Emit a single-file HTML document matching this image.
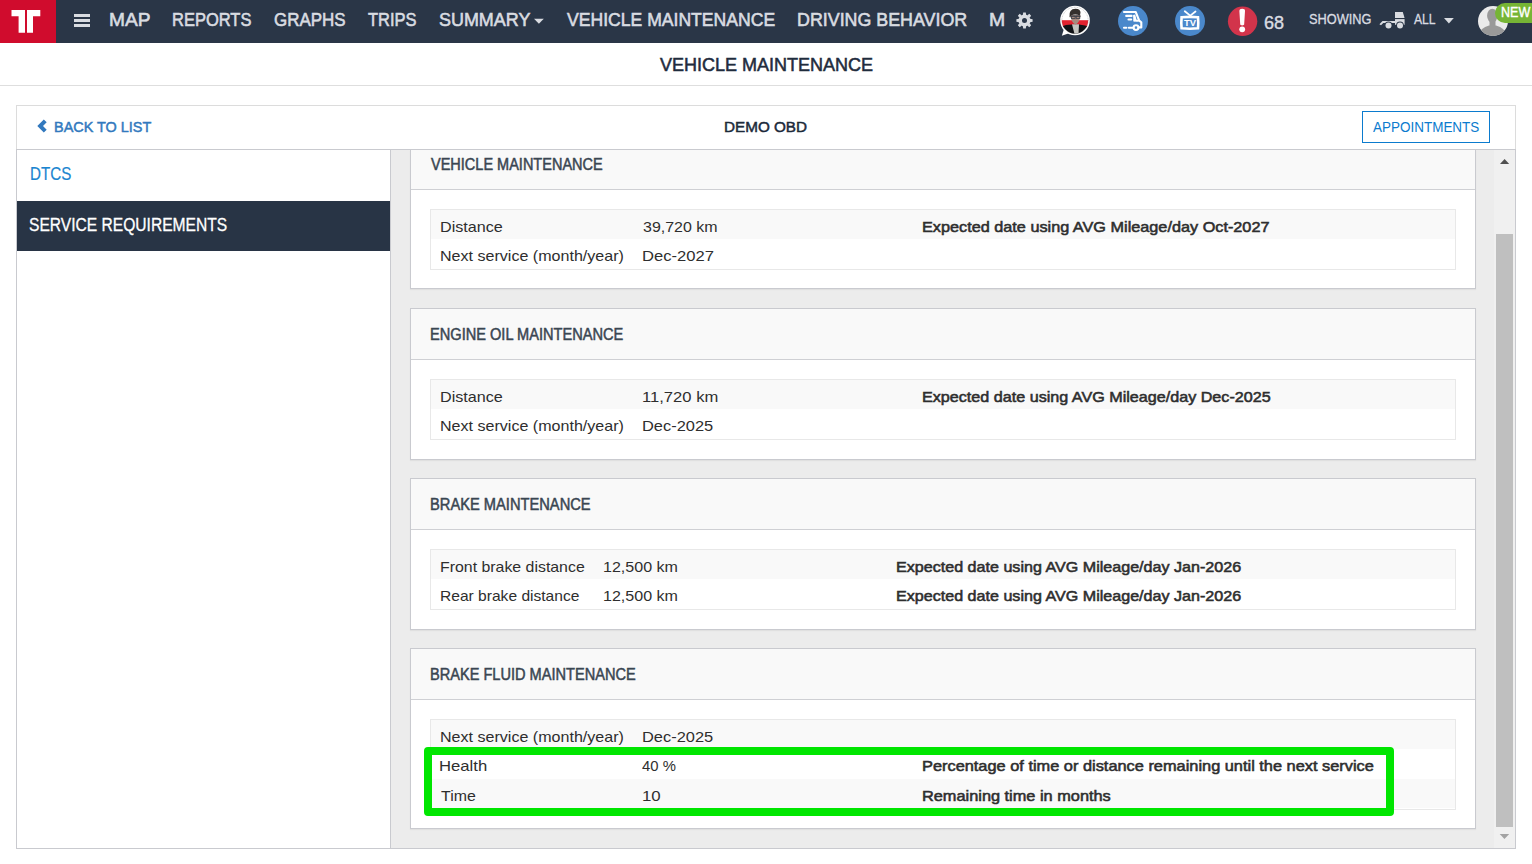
<!DOCTYPE html>
<html><head><meta charset="utf-8"><title>Vehicle Maintenance</title>
<style>
html,body{margin:0;padding:0;width:1532px;height:864px;overflow:hidden;background:#fff;font-family:"Liberation Sans",sans-serif;}
.b{position:absolute;box-sizing:border-box;}
.t{position:absolute;white-space:nowrap;line-height:normal;transform-origin:0 0;font-family:"Liberation Sans",sans-serif;}
svg{position:absolute;overflow:visible}
</style></head><body>
<!-- navbar -->
<div class=b style="left:0;top:0;width:1532px;height:43px;background:#2a3647"></div>
<div class=b style="left:0;top:0;width:56px;height:43px;background:#d00c2d"></div>
<svg style="left:0;top:0" width="56" height="42"><path fill="#fff" d="M11.5 10H25V32.7H18.6V16.2H11.5Z M27 10H40.3V16.2H33V32.7H27Z"/></svg>
<div class=b style="left:74px;top:14px;width:16px;height:3px;background:#d9dce1"></div>
<div class=b style="left:74px;top:19px;width:16px;height:3px;background:#d9dce1"></div>
<div class=b style="left:74px;top:24px;width:16px;height:3px;background:#d9dce1"></div>
<svg style="left:0;top:0" width="1" height="1"><path fill="#d9dce1" d="M534 18.7H543.8L538.9 23.8Z"/></svg>
<!-- gear -->
<svg style="left:1015.9px;top:11.9px" width="17" height="17" viewBox="-8.5 -8.5 17 17"><g fill="#d9dce1"><circle r="6"/>
<path id="tooth" d="M-1.7 -5.5L-1.3 -8.1H1.3L1.7 -5.5Z"/>
<use href="#tooth" transform="rotate(45)"/><use href="#tooth" transform="rotate(90)"/><use href="#tooth" transform="rotate(135)"/><use href="#tooth" transform="rotate(180)"/><use href="#tooth" transform="rotate(225)"/><use href="#tooth" transform="rotate(270)"/><use href="#tooth" transform="rotate(315)"/></g>
<circle r="2.5" fill="#2a3647"/></svg>
<!-- avatar -->
<svg style="left:1058px;top:4px" width="34" height="34" viewBox="1058 4 34 34">
<defs><clipPath id="avc"><circle cx="1075" cy="20.5" r="13.2"/></clipPath></defs>
<path fill="#fff" d="M1061.8 35.8L1063.8 29.5L1069 33.2Z"/>
<circle cx="1075" cy="20.5" r="14.8" fill="#fff"/>
<g clip-path="url(#avc)">
<rect x="1060" y="4" width="30" height="16.5" fill="#fff"/>
<rect x="1060" y="20.2" width="30" height="7" fill="#e2222f"/>
<path fill="#101216" d="M1060 40V27L1066 25L1072 24.5L1079 24.5L1085 25.5L1090 27V40Z"/>
<path fill="#c4c4c0" d="M1072 24.2L1079 24.2L1078.5 34H1074.5Z"/>
<path fill="#a88a7e" d="M1070.5 15Q1071 22.5 1075.5 24.8Q1080 22.5 1080.5 15Z"/>
<path fill="#35302d" d="M1069.5 17Q1068.5 9 1075.5 8.8Q1080.5 9 1080.5 12.5L1080 15.5Q1075 13.5 1071 15.5L1070.5 17.5Z"/>
<path fill="none" stroke="#3a3f48" stroke-width="1.1" d="M1071.2 16.3H1080.5"/>
<rect x="1071.5" y="16" width="3.6" height="2.4" fill="none" stroke="#3a3f48" stroke-width="0.8"/>
<rect x="1076.2" y="16" width="3.6" height="2.4" fill="none" stroke="#3a3f48" stroke-width="0.8"/>
</g>
<circle cx="1075" cy="20.5" r="13.2" fill="none" stroke="#777" stroke-width="0.4" stroke-dasharray="0.8 0.8"/>
</svg>
<!-- truck circle -->
<svg style="left:1116px;top:4px" width="34" height="34" viewBox="1116 4 34 34">
<circle cx="1133" cy="21" r="15" fill="#4a88cb"/>
<g fill="none" stroke="#fff" stroke-width="2.1" stroke-linecap="round" stroke-linejoin="round">
<path d="M1124 12H1135.7L1139.2 20.6L1141.3 22.3V27.4H1138.6"/>
<path d="M1126.2 15.9H1131.6"/>
<path d="M1128.5 19.5H1131.2"/>
<path d="M1124 27.7H1126.3"/>
<path d="M1128.8 27.7H1133.3"/>
<path d="M1134.3 15.8L1135.8 20.8H1138" />
<path d="M1134.3 15.8V20.8"/>
<circle cx="1136" cy="27.6" r="2.4"/>
</g></svg>
<!-- tv circle -->
<svg style="left:1173px;top:4px" width="34" height="34" viewBox="1173 4 34 34">
<circle cx="1190" cy="21" r="15" fill="#4a88cb"/>
<g stroke="#fff" fill="none" stroke-linecap="round">
<path d="M1184.8 11.2L1189.9 15.4M1195.5 11.5L1190.6 15.4" stroke-width="1.8"/>
<path d="M1181.6 17.3Q1190 16.4 1198 17.3Q1198.6 22.8 1198 28.3Q1190 29.1 1181.6 28.3Q1181 22.8 1181.6 17.3Z" stroke-width="2.6"/>
</g>
<text x="1190" y="25.9" font-family="Liberation Sans" font-weight="bold" font-size="9.4" fill="#fff" text-anchor="middle">TV</text>
</svg>
<!-- alert circle -->
<svg style="left:1226px;top:4px" width="34" height="34" viewBox="1226 4 34 34">
<circle cx="1242.6" cy="21.3" r="14.7" fill="#d2344b"/>
<path fill="#fff" d="M1239.4 10.9Q1239.4 8.8 1242.2 8.8Q1245.1 8.8 1245 10.9L1244.2 24.6Q1244.1 25.4 1242.2 25.4Q1240.3 25.4 1240.2 24.6Z"/>
<circle cx="1242.2" cy="29.3" r="2.9" fill="#fff"/>
</svg>
<!-- showing truck -->
<svg style="left:1376px;top:8px" width="34" height="24" viewBox="1376 8 34 24">
<g fill="#d9dce1">
<path d="M1395 12.1H1402.8L1404.5 17.7V18H1395Z"/>
<path d="M1395 19.1H1404.6V24.8H1395Z"/>
<path d="M1379.4 24.2L1382.5 21.1H1395V23H1383.3L1381 25.3Z"/>
</g>
<circle cx="1388.5" cy="25.4" r="3.9" fill="#2a3647"/>
<circle cx="1400" cy="25.4" r="3.9" fill="#2a3647"/>
<circle cx="1388.5" cy="25.4" r="3" fill="#d9dce1"/>
<circle cx="1400" cy="25.4" r="3" fill="#d9dce1"/>
</svg>
<svg style="left:0;top:0" width="1" height="1"><path fill="#d9dce1" d="M1444 18H1453.8L1448.9 23.4Z"/></svg>
<!-- user avatar -->
<svg style="left:1476px;top:4px" width="34" height="34" viewBox="1476 4 34 34">
<defs><clipPath id="uac"><circle cx="1493" cy="21" r="15"/></clipPath></defs>
<circle cx="1493" cy="21" r="15" fill="#ebebeb"/>
<g clip-path="url(#uac)" fill="#999">
<ellipse cx="1492.3" cy="15.8" rx="5.2" ry="7"/>
<path d="M1477 40Q1478 28.5 1489 25.5L1496 25.5Q1507 28.5 1509 40Z"/>
<rect x="1489.5" y="20" width="6" height="7"/>
</g></svg>
<div class=b style="left:1495px;top:3px;width:48px;height:20px;border-radius:10px;background:#76b535"></div>
<!-- title line -->
<div class=b style="left:0;top:85px;width:1532px;height:1px;background:#dedede"></div>
<!-- card -->
<div class=b style="left:16px;top:105px;width:1500px;height:45px;border:1px solid #dcdcdc;border-bottom:none;background:#fff"></div>
<div class=b style="left:16px;top:149px;width:1500px;height:700px;border:1px solid #c9cacf;background:#fff"></div>
<svg style="left:0;top:0" width="1" height="1"><path fill="#3279be" d="M37.3 126L43.8 119.5L46.7 122.3L43 126L46.7 129.7L43.8 132.6Z"/></svg>
<div class=b style="left:1362px;top:111px;width:128px;height:32px;border:1px solid #0b7bce"></div>
<!-- sidebar -->
<div class=b style="left:17px;top:201px;width:373px;height:50px;background:#283445"></div>
<div class=b style="left:390px;top:150px;width:1px;height:698px;background:#c9cacf"></div>
<div class=b style="left:391px;top:150px;width:1124px;height:698px;background:#ececec"></div>
<div class=b style="left:1494px;top:150px;width:21px;height:698px;background:#f0f0f0"></div>
<div class=b style="left:1496px;top:234px;width:17px;height:593px;background:#bfbfbf"></div>
<svg style="left:0;top:0" width="1" height="1"><path fill="#505050" d="M1500 164H1509.2L1504.6 159Z"/><path fill="#a3a3a3" d="M1499.7 834H1509.2L1504.45 839Z"/></svg>
<div class=b style="left:410px;top:150px;width:1066px;height:139px;border:1px solid #c9cacf;border-top:none;background:#fff;box-shadow:0 1px 1px rgba(0,0,0,.05)"></div>
<div class=b style="left:411px;top:150px;width:1064px;height:39px;background:#f9f9f9;border-bottom:1px solid #cfd0d4;box-sizing:content-box"></div>
<div class=b style="left:430px;top:209px;width:1026px;height:61px;border:1px solid #e8e8e8;background:#fff"></div>
<div class=b style="left:431px;top:210px;width:1024px;height:29px;background:#f9f9f9"></div>
<div class=b style="left:410px;top:308px;width:1066px;height:152px;border:1px solid #c9cacf;background:#fff;box-shadow:0 1px 1px rgba(0,0,0,.05)"></div>
<div class=b style="left:411px;top:309px;width:1064px;height:50px;background:#f9f9f9;border-bottom:1px solid #cfd0d4;box-sizing:content-box"></div>
<div class=b style="left:430px;top:379px;width:1026px;height:61px;border:1px solid #e8e8e8;background:#fff"></div>
<div class=b style="left:431px;top:380px;width:1024px;height:29px;background:#f9f9f9"></div>
<div class=b style="left:410px;top:478px;width:1066px;height:152px;border:1px solid #c9cacf;background:#fff;box-shadow:0 1px 1px rgba(0,0,0,.05)"></div>
<div class=b style="left:411px;top:479px;width:1064px;height:50px;background:#f9f9f9;border-bottom:1px solid #cfd0d4;box-sizing:content-box"></div>
<div class=b style="left:430px;top:549px;width:1026px;height:61px;border:1px solid #e8e8e8;background:#fff"></div>
<div class=b style="left:431px;top:550px;width:1024px;height:29px;background:#f9f9f9"></div>
<div class=b style="left:410px;top:648px;width:1066px;height:181px;border:1px solid #c9cacf;background:#fff;box-shadow:0 1px 1px rgba(0,0,0,.05)"></div>
<div class=b style="left:411px;top:649px;width:1064px;height:50px;background:#f9f9f9;border-bottom:1px solid #cfd0d4;box-sizing:content-box"></div>
<div class=b style="left:430px;top:719px;width:1026px;height:91px;border:1px solid #e8e8e8;background:#fff"></div>
<div class=b style="left:431px;top:720px;width:1024px;height:29px;background:#f9f9f9"></div>
<div class=b style="left:431px;top:779px;width:1024px;height:29px;background:#f9f9f9"></div>
<div class=b style="left:424px;top:747px;width:970px;height:69px;border:8px solid #00e600;border-radius:4px"></div>

<div class=t style="left:108.79px;top:9.10px;font-size:19px;font-weight:normal;color:#d9dce1;transform:scaleX(1.0076);-webkit-text-stroke:0.6px #d9dce1">MAP</div>
<div class=t style="left:172.13px;top:9.10px;font-size:19px;font-weight:normal;color:#d9dce1;transform:scaleX(0.8683);-webkit-text-stroke:0.6px #d9dce1">REPORTS</div>
<div class=t style="left:274.00px;top:9.10px;font-size:19px;font-weight:normal;color:#d9dce1;transform:scaleX(0.8923);-webkit-text-stroke:0.6px #d9dce1">GRAPHS</div>
<div class=t style="left:368.20px;top:9.10px;font-size:19px;font-weight:normal;color:#d9dce1;transform:scaleX(0.8665);-webkit-text-stroke:0.6px #d9dce1">TRIPS</div>
<div class=t style="left:439.00px;top:9.10px;font-size:19px;font-weight:normal;color:#d9dce1;transform:scaleX(0.9444);-webkit-text-stroke:0.6px #d9dce1">SUMMARY</div>
<div class=t style="left:566.80px;top:9.10px;font-size:19px;font-weight:normal;color:#d9dce1;transform:scaleX(0.9255);-webkit-text-stroke:0.6px #d9dce1">VEHICLE MAINTENANCE</div>
<div class=t style="left:796.86px;top:9.10px;font-size:19px;font-weight:normal;color:#d9dce1;transform:scaleX(0.9392);-webkit-text-stroke:0.6px #d9dce1">DRIVING BEHAVIOR</div>
<div class=t style="left:988.68px;top:9.10px;font-size:19px;font-weight:normal;color:#d9dce1;transform:scaleX(1.0214);-webkit-text-stroke:0.6px #d9dce1">M</div>
<div class=t style="left:1263.50px;top:11.70px;font-size:19px;font-weight:normal;color:#d9dce1;transform:scaleX(0.9481);-webkit-text-stroke:0.4px #d9dce1">68</div>
<div class=t style="left:1309.30px;top:10.70px;font-size:14px;font-weight:normal;color:#d9dce1;transform:scaleX(0.9119);-webkit-text-stroke:0.3px #d9dce1">SHOWING</div>
<div class=t style="left:1413.50px;top:10.70px;font-size:14px;font-weight:normal;color:#d9dce1;transform:scaleX(0.8677);-webkit-text-stroke:0.3px #d9dce1">ALL</div>
<div class=t style="left:1500.71px;top:3.70px;font-size:14px;font-weight:normal;color:#ffffff;transform:scaleX(0.8937);-webkit-text-stroke:0.4px #ffffff">NEW</div>
<div class=t style="left:660.00px;top:53.70px;font-size:19.2px;font-weight:normal;color:#1f2c3d;transform:scaleX(0.9382);-webkit-text-stroke:0.55px #1f2c3d">VEHICLE MAINTENANCE</div>
<div class=t style="left:53.86px;top:117.70px;font-size:15.4px;font-weight:normal;color:#3279be;transform:scaleX(0.9377);-webkit-text-stroke:0.5px #3279be">BACK TO LIST</div>
<div class=t style="left:723.88px;top:118.40px;font-size:15px;font-weight:normal;color:#1c2a3a;transform:scaleX(1.0168);-webkit-text-stroke:0.5px #1c2a3a">DEMO OBD</div>
<div class=t style="left:1373.20px;top:118.50px;font-size:14px;font-weight:normal;color:#0b7bce;transform:scaleX(0.9626)">APPOINTMENTS</div>
<div class=t style="left:29.73px;top:164.20px;font-size:17.5px;font-weight:normal;color:#1a85d0;transform:scaleX(0.8659);-webkit-text-stroke:0.2px #1a85d0">DTCS</div>
<div class=t style="left:29.40px;top:214.50px;font-size:17.5px;font-weight:normal;color:#ffffff;transform:scaleX(0.8914);-webkit-text-stroke:0.3px #ffffff">SERVICE REQUIREMENTS</div>
<div class=t style="left:430.80px;top:156.00px;font-size:15.8px;font-weight:normal;color:#3a4652;transform:scaleX(0.9183);-webkit-text-stroke:0.5px #3a4652">VEHICLE MAINTENANCE</div>
<div class=t style="left:439.62px;top:217.50px;font-size:15px;font-weight:normal;color:#2e2e2e;transform:scaleX(1.0769)">Distance</div>
<div class=t style="left:642.70px;top:217.50px;font-size:15px;font-weight:normal;color:#2e2e2e;transform:scaleX(1.0640)">39,720 km</div>
<div class=t style="left:921.82px;top:217.50px;font-size:15px;font-weight:normal;color:#2e2e2e;transform:scaleX(1.0833);-webkit-text-stroke:0.55px #2e2e2e">Expected date using AVG Mileage/day Oct-2027</div>
<div class=t style="left:439.63px;top:247.00px;font-size:15px;font-weight:normal;color:#2e2e2e;transform:scaleX(1.0708)">Next service (month/year)</div>
<div class=t style="left:641.59px;top:247.00px;font-size:15px;font-weight:normal;color:#2e2e2e;transform:scaleX(1.1068)">Dec-2027</div>
<div class=t style="left:429.88px;top:326.00px;font-size:15.8px;font-weight:normal;color:#3a4652;transform:scaleX(0.9239);-webkit-text-stroke:0.5px #3a4652">ENGINE OIL MAINTENANCE</div>
<div class=t style="left:439.62px;top:387.50px;font-size:15px;font-weight:normal;color:#2e2e2e;transform:scaleX(1.0769)">Distance</div>
<div class=t style="left:641.79px;top:387.50px;font-size:15px;font-weight:normal;color:#2e2e2e;transform:scaleX(1.1063)">11,720 km</div>
<div class=t style="left:921.92px;top:387.50px;font-size:15px;font-weight:normal;color:#2e2e2e;transform:scaleX(1.0758);-webkit-text-stroke:0.55px #2e2e2e">Expected date using AVG Mileage/day Dec-2025</div>
<div class=t style="left:439.63px;top:417.00px;font-size:15px;font-weight:normal;color:#2e2e2e;transform:scaleX(1.0708)">Next service (month/year)</div>
<div class=t style="left:641.91px;top:417.00px;font-size:15px;font-weight:normal;color:#2e2e2e;transform:scaleX(1.0942)">Dec-2025</div>
<div class=t style="left:429.87px;top:496.00px;font-size:15.8px;font-weight:normal;color:#3a4652;transform:scaleX(0.9289);-webkit-text-stroke:0.5px #3a4652">BRAKE MAINTENANCE</div>
<div class=t style="left:439.74px;top:557.50px;font-size:15px;font-weight:normal;color:#2e2e2e;transform:scaleX(1.0584)">Front brake distance</div>
<div class=t style="left:603.23px;top:557.50px;font-size:15px;font-weight:normal;color:#2e2e2e;transform:scaleX(1.0708)">12,500 km</div>
<div class=t style="left:895.83px;top:557.50px;font-size:15px;font-weight:normal;color:#2e2e2e;transform:scaleX(1.0732);-webkit-text-stroke:0.55px #2e2e2e">Expected date using AVG Mileage/day Jan-2026</div>
<div class=t style="left:439.76px;top:587.00px;font-size:15px;font-weight:normal;color:#2e2e2e;transform:scaleX(1.0384)">Rear brake distance</div>
<div class=t style="left:603.23px;top:587.00px;font-size:15px;font-weight:normal;color:#2e2e2e;transform:scaleX(1.0708)">12,500 km</div>
<div class=t style="left:895.83px;top:587.00px;font-size:15px;font-weight:normal;color:#2e2e2e;transform:scaleX(1.0732);-webkit-text-stroke:0.55px #2e2e2e">Expected date using AVG Mileage/day Jan-2026</div>
<div class=t style="left:429.88px;top:666.00px;font-size:15.8px;font-weight:normal;color:#3a4652;transform:scaleX(0.9227);-webkit-text-stroke:0.5px #3a4652">BRAKE FLUID MAINTENANCE</div>
<div class=t style="left:439.63px;top:727.50px;font-size:15px;font-weight:normal;color:#2e2e2e;transform:scaleX(1.0708)">Next service (month/year)</div>
<div class=t style="left:641.91px;top:727.50px;font-size:15px;font-weight:normal;color:#2e2e2e;transform:scaleX(1.0942)">Dec-2025</div>
<div class=t style="left:439.49px;top:757.00px;font-size:15px;font-weight:normal;color:#2e2e2e;transform:scaleX(1.1115)">Health</div>
<div class=t style="left:642.40px;top:757.00px;font-size:15px;font-weight:normal;color:#2e2e2e;transform:scaleX(0.9896)">40 %</div>
<div class=t style="left:921.71px;top:757.00px;font-size:15px;font-weight:normal;color:#2e2e2e;transform:scaleX(1.0905);-webkit-text-stroke:0.55px #2e2e2e">Percentage of time or distance remaining until the next service</div>
<div class=t style="left:440.60px;top:786.50px;font-size:15px;font-weight:normal;color:#2e2e2e;transform:scaleX(1.0606)">Time</div>
<div class=t style="left:642.18px;top:786.50px;font-size:15px;font-weight:normal;color:#2e2e2e;transform:scaleX(1.1211)">10</div>
<div class=t style="left:921.71px;top:786.50px;font-size:15px;font-weight:normal;color:#2e2e2e;transform:scaleX(1.0884);-webkit-text-stroke:0.55px #2e2e2e">Remaining time in months</div>
</body></html>
